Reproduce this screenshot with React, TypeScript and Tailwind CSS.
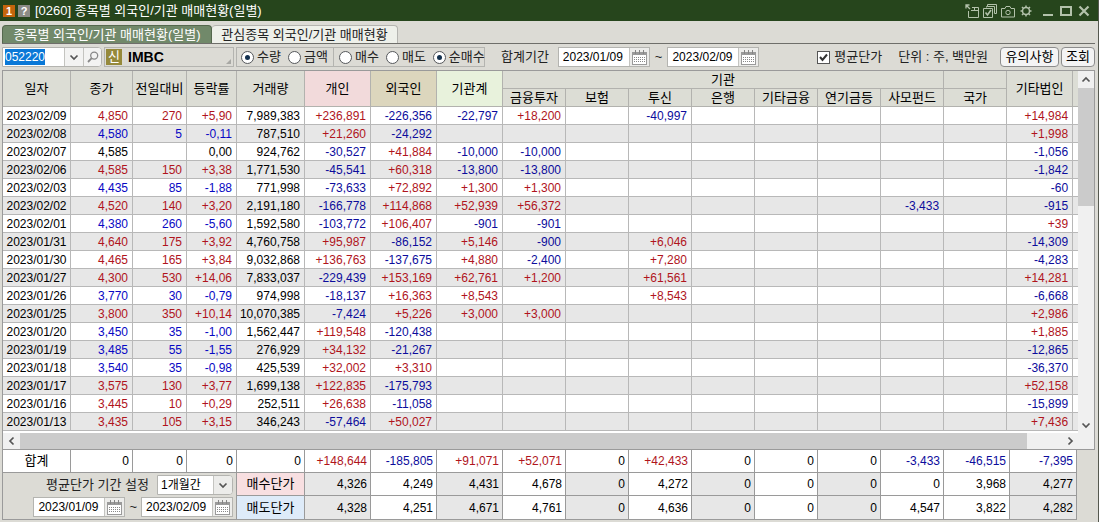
import { useState } from "react";
import type { ReactNode } from "react";

const RED = "text-[#b0141c]";
const BLUE = "text-[#0c0c9c]";
const BRIGHT_BLUE = "text-[#0808c4]";

const BASE_HEADERS = [
  { label: "종가", className: "bg-[#dcddd5]" },
  { label: "전일대비", className: "bg-[#dcddd5]" },
  { label: "등락률", className: "bg-[#dcddd5]" },
  { label: "거래량", className: "bg-[#dcddd5]" },
  { label: "개인", className: "bg-[#f2dadb]" },
  { label: "외국인", className: "bg-[#dcd6bd]" },
  { label: "기관계", className: "bg-[#e8f2dc]" },
];

const INSTITUTIONS = ["금융투자", "보험", "투신", "은행", "기타금융", "연기금등", "사모펀드", "국가"];

// date, close, change, rate, volume, individual, foreign, institutions total, 8 institutions, other corp.
const ROWS = [
  ["2023/02/09", "4,850", "270", "+5,90", "7,989,383", "+236,891", "-226,356", "-22,797", "+18,200", "", "-40,997", "", "", "", "", "", "+14,984"],
  ["2023/02/08", "4,580", "5", "-0,11", "787,510", "+21,260", "-24,292", "", "", "", "", "", "", "", "", "", "+1,998"],
  ["2023/02/07", "4,585", "", "0,00", "924,762", "-30,527", "+41,884", "-10,000", "-10,000", "", "", "", "", "", "", "", "-1,056"],
  ["2023/02/06", "4,585", "150", "+3,38", "1,771,530", "-45,541", "+60,318", "-13,800", "-13,800", "", "", "", "", "", "", "", "-1,842"],
  ["2023/02/03", "4,435", "85", "-1,88", "771,998", "-73,633", "+72,892", "+1,300", "+1,300", "", "", "", "", "", "", "", "-60"],
  ["2023/02/02", "4,520", "140", "+3,20", "2,191,180", "-166,778", "+114,868", "+52,939", "+56,372", "", "", "", "", "", "-3,433", "", "-915"],
  ["2023/02/01", "4,380", "260", "-5,60", "1,592,580", "-103,772", "+106,407", "-901", "-901", "", "", "", "", "", "", "", "+39"],
  ["2023/01/31", "4,640", "175", "+3,92", "4,760,758", "+95,987", "-86,152", "+5,146", "-900", "", "+6,046", "", "", "", "", "", "-14,309"],
  ["2023/01/30", "4,465", "165", "+3,84", "9,032,868", "+136,763", "-137,675", "+4,880", "-2,400", "", "+7,280", "", "", "", "", "", "-4,283"],
  ["2023/01/27", "4,300", "530", "+14,06", "7,833,037", "-229,439", "+153,169", "+62,761", "+1,200", "", "+61,561", "", "", "", "", "", "+14,281"],
  ["2023/01/26", "3,770", "30", "-0,79", "974,998", "-18,137", "+16,363", "+8,543", "", "", "+8,543", "", "", "", "", "", "-6,668"],
  ["2023/01/25", "3,800", "350", "+10,14", "10,070,385", "-7,424", "+5,226", "+3,000", "+3,000", "", "", "", "", "", "", "", "+2,986"],
  ["2023/01/20", "3,450", "35", "-1,00", "1,562,447", "+119,548", "-120,438", "", "", "", "", "", "", "", "", "", "+1,885"],
  ["2023/01/19", "3,485", "55", "-1,55", "276,929", "+34,132", "-21,267", "", "", "", "", "", "", "", "", "", "-12,865"],
  ["2023/01/18", "3,540", "35", "-0,98", "425,539", "+32,002", "+3,310", "", "", "", "", "", "", "", "", "", "-36,370"],
  ["2023/01/17", "3,575", "130", "+3,77", "1,699,138", "+122,835", "-175,793", "", "", "", "", "", "", "", "", "", "+52,158"],
  ["2023/01/16", "3,445", "10", "+0,29", "252,511", "+26,638", "-11,058", "", "", "", "", "", "", "", "", "", "-15,899"],
  ["2023/01/13", "3,435", "105", "+3,15", "346,243", "-57,464", "+50,027", "", "", "", "", "", "", "", "", "", "+7,436"],
];

const TOTALS = ["0", "0", "0", "0", "+148,644", "-185,805", "+91,071", "+52,071", "0", "+42,433", "0", "0", "0", "-3,433", "-46,515", "-7,395"];
const BUY_PRICES = ["4,326", "4,249", "4,431", "4,678", "0", "4,272", "0", "0", "0", "0", "3,968", "4,277"];
const SELL_PRICES = ["4,328", "4,251", "4,671", "4,761", "0", "4,636", "0", "0", "0", "4,547", "3,822", "4,282"];
const SHADED = [true, false, true, false, true, false, true, false, true, false, false, true];

function signColor(value: string, blue = BLUE) {
  if (value.startsWith("+")) return RED;
  if (value.startsWith("-")) return blue;
  return "text-black";
}

// price, change and rate all follow the direction of the day
function cellColor(row: string[], i: number) {
  return i >= 1 && i <= 3 ? signColor(row[3], BRIGHT_BLUE) : signColor(row[i]);
}

function Chevron({ dir }: { dir: "up" | "down" | "left" | "right" }) {
  const paths = {
    up: "M1.5 6.5 5 3l3.5 3.5",
    down: "M1.5 3.5 5 7l3.5-3.5",
    left: "M6.5 1.5 3 5l3.5 3.5",
    right: "M3.5 1.5 7 5 3.5 8.5",
  };
  return (
    <svg width="10" height="10" viewBox="0 0 10 10" fill="none" stroke="#555" strokeWidth="1.700" aria-hidden="true">
      <path d={paths[dir]} />
    </svg>
  );
}

function CalendarIcon() {
  return (
    <svg width="15" height="15" viewBox="0 0 15 15" fill="none" aria-hidden="true">
      <rect x="0.5" y="2.5" width="14" height="12" fill="#fff" stroke="#9a9a9a" />
      <path d="M1 4h13" stroke="#9a9a9a" strokeWidth="2" />
      <path d="M3.500 0v4M7.500 0v4M11.500 0v4" stroke="#858585" />
      <path d="M2 7.500h11M2 9.500h11M2 11.500h11" stroke="#888" strokeDasharray="1 1" />
    </svg>
  );
}

function DateField({ label, value }: { label: string; value: string }) {
  return (
    <div className="flex h-5 border border-[#b4b4b0] bg-white">
      <input
        type="text"
        aria-label={label}
        defaultValue={value}
        className="w-[70px] bg-white pl-1 text-xs text-black outline-none"
      />
      <button type="button" aria-label={`${label} 달력`} className="flex w-5 items-center justify-center border-l border-[#c4c4c0] bg-[#ececea]">
        <CalendarIcon />
      </button>
    </div>
  );
}

function Radio({ name, label, checked, onChange }: { name: string; label: string; checked: boolean; onChange: () => void }) {
  return (
    <label className="flex items-center gap-[3px] whitespace-nowrap">
      <input
        type="radio"
        name={name}
        checked={checked}
        onChange={onChange}
        className="grid size-[13px] appearance-none place-items-center rounded-full border border-[#55585c] bg-white before:size-[5px] before:rounded-full before:content-[''] checked:before:bg-[#12304e]"
      />
      {label}
    </label>
  );
}

function TitleButton({ label, children }: { label: string; children: ReactNode }) {
  return (
    <button type="button" aria-label={label} className="flex size-[18px] items-center justify-center text-[#b3c2ab]">
      <svg width="14" height="14" viewBox="0 0 14 14" fill="none" stroke="currentColor" aria-hidden="true">
        {children}
      </svg>
    </button>
  );
}

function TitleBar() {
  return (
    <header className="flex h-[21px] items-center bg-[#26451c] pr-[5px] pl-[3px] text-white">
      <span className="flex size-3 items-center justify-center bg-[#c4650c] text-[11px] font-bold">1</span>
      <span className="ml-[3px] flex size-3 items-center justify-center bg-[#8b8b86] text-[11px] font-bold">?</span>
      <h1 className="ml-[5px] text-[13px] whitespace-nowrap">[0260] 종목별 외국인/기관 매매현황(일별)</h1>
      <div className="ml-auto flex">
        <TitleButton label="분리">
          <path d="M1 1l4 4M1 4.500V1h3.500" strokeWidth="1.300" />
          <path d="M3.500 7v6.500h10v-10H7M6 6.500h7.500M9.500 3.500v3" />
        </TitleButton>
        <TitleButton label="복사">
          <path d="M3.500 3.500v-1h1v-2h9v9h-2M4.500 2.500h7v7" />
          <path d="M.5 4.500h9v9h-9z" />
          <path d="M2.500 8.500l2 2.500 3.500-5" strokeWidth="1.600" />
        </TitleButton>
        <TitleButton label="화면 저장">
          <path d="M1 4.500h3l1-2h4l1 2h3.500v8.500H.5V4.500z" />
          <circle cx="7" cy="8.500" r="2.200" />
        </TitleButton>
        <TitleButton label="설정">
          <circle cx="7" cy="7" r="3.500" strokeWidth="1.500" />
          <path d="M7 1.500v2M7 10.500v2M1.500 7h2M10.500 7h2M3 3l1.500 1.500M9.500 9.500 11 11M11 3 9.500 4.500M4.500 9.500 3 11" strokeWidth="1.500" />
        </TitleButton>
      </div>
      <div className="ml-1 flex">
        <TitleButton label="최소화">
          <path d="M2 11h10" strokeWidth="2" />
        </TitleButton>
        <TitleButton label="최대화">
          <path d="M2 3h10v8H2z" strokeWidth="2" />
        </TitleButton>
        <TitleButton label="닫기">
          <path d="M2.500 2.500l9 9M11.500 2.500l-9 9" strokeWidth="2.200" />
        </TitleButton>
      </div>
    </header>
  );
}

function Toolbar() {
  const [unit, setUnit] = useState("수량");
  const [side, setSide] = useState("순매수");

  return (
    <div className="flex items-center py-[3px]">
      <div className="flex h-5 overflow-hidden rounded-r border border-[#b4b4b0] bg-white">
        <input
          type="text"
          aria-label="종목코드"
          defaultValue="052220"
          autoFocus
          onFocus={(e) => e.target.select()}
          className="w-[61px] bg-white pl-0.5 text-xs outline-none selection:bg-[#0a78d7] selection:text-white"
        />
        <button type="button" aria-label="최근 종목" className="flex w-[19px] items-center justify-center border-l border-[#c4c4c0] bg-[#f3f3f2]">
          <Chevron dir="down" />
        </button>
        <button type="button" aria-label="종목 검색" className="flex w-[18px] items-center justify-center border-l border-[#c4c4c0] bg-[#f3f3f2]">
          <svg width="12" height="12" viewBox="0 0 12 12" fill="none" stroke="#888" strokeWidth="1.300" aria-hidden="true">
            <circle cx="7.200" cy="4.600" r="3.500" />
            <path d="M4.700 7.200 1 11" strokeWidth="1.800" />
          </svg>
        </button>
      </div>

      <div className="ml-0.5 flex h-5 w-[130px] items-center border border-[#b4b4b0] pl-px">
        <span className="flex size-4 items-center justify-center bg-[#95893a] text-[13px] text-white">신</span>
        <span className="ml-[6px] text-sm font-bold text-black">IMBC</span>
        <svg width="5" height="5" viewBox="0 0 5 5" className="mt-auto mr-0.5 mb-0.5 ml-auto" aria-hidden="true">
          <path d="M5 0v5H0z" fill="#a8a8a4" />
        </svg>
      </div>

      <div className="ml-0.5 flex h-5 w-[98px] items-center gap-[7px] border border-[#b4b4b0] pl-1">
        {["수량", "금액"].map((v) => (
          <Radio key={v} name="unit" label={v} checked={unit === v} onChange={() => setUnit(v)} />
        ))}
      </div>
      <div className="flex h-5 w-[151px] items-center gap-[7px] border border-l-0 border-[#b4b4b0] pl-[5px]">
        {["매수", "매도", "순매수"].map((v) => (
          <Radio key={v} name="side" label={v} checked={side === v} onChange={() => setSide(v)} />
        ))}
      </div>

      <span className="ml-4 whitespace-nowrap">합계기간</span>
      <div className="ml-[9px] flex items-center gap-[5px]">
        <DateField label="합계기간 시작일" value="2023/01/09" />
        <span>~</span>
        <DateField label="합계기간 종료일" value="2023/02/09" />
      </div>

      <label className="ml-auto flex items-center gap-1 whitespace-nowrap">
        <input type="checkbox" defaultChecked className="peer sr-only" />
        <svg width="13" height="13" viewBox="0 0 13 13" className="peer-checked:[&>path]:opacity-100" aria-hidden="true">
          <rect x="0.5" y="0.5" width="12" height="12" fill="#fff" stroke="#555" />
          <path d="M3 6l2.500 3L10 3.500" fill="none" stroke="#333" strokeWidth="2" className="opacity-0" />
        </svg>
        평균단가
      </label>
      <span className="ml-4 whitespace-nowrap">단위 : 주, 백만원</span>
      <button type="button" className="ml-3 h-5 w-[59px] rounded-[4px] border border-[#8c8c8c] bg-[#f4f4f4] whitespace-nowrap text-black">
        유의사항
      </button>
      <button type="button" className="ml-0.5 h-5 w-[34px] rounded-[4px] border border-[#8c8c8c] bg-[#f4f4f4] whitespace-nowrap text-black">
        조회
      </button>
    </div>
  );
}

function TradeTable() {
  const head = "border-r border-b border-[#b2b2ae] p-0 font-normal whitespace-nowrap";

  return (
    <table className="w-full table-fixed border-separate border-spacing-0 text-black">
      <colgroup>
        <col className="w-[68px]" />
        <col className="w-[62px]" />
        <col className="w-[54px]" />
        <col className="w-[50px]" />
        <col className="w-[68px]" />
        <col className="w-[66px]" />
        <col className="w-[66px]" />
        <col className="w-[66px]" />
        {INSTITUTIONS.map((name) => (
          <col key={name} className="w-[63px]" />
        ))}
        <col className="w-[66px]" />
        <col />
      </colgroup>
      <thead className="bg-[#dcddd5] text-[13px] leading-4">
        <tr className="h-[18px]">
          <th rowSpan={2} className={head}>일자</th>
          {BASE_HEADERS.map((h) => (
            <th key={h.label} rowSpan={2} className={`${head} ${h.className}`}>
              {h.label}
            </th>
          ))}
          <th colSpan={7} className={head}>기관</th>
          <th className={head}></th>
          <th rowSpan={2} className={head}>기타법인</th>
          <th rowSpan={2} className="border-b border-[#b2b2ae] p-0"></th>
        </tr>
        <tr className="h-[18px]">
          {INSTITUTIONS.map((name) => (
            <th key={name} className={head}>{name}</th>
          ))}
        </tr>
      </thead>
      <tbody className="text-xs">
        {ROWS.map((row) => (
          <tr key={row[0]} className="h-[18px] odd:bg-white even:bg-[#e7e7e7]">
            {row.map((value, i) => (
              <td
                key={i}
                className={`border-r border-b border-[#b8b8b8] py-0 whitespace-nowrap ${
                  i === 0 ? "px-0 text-center" : "pr-1 pl-0 text-right"
                } ${cellColor(row, i)}`}
              >
                {value}
              </td>
            ))}
            <td className="border-b border-[#b8b8b8] p-0"></td>
          </tr>
        ))}
      </tbody>
    </table>
  );
}

function SummaryTable() {
  const cell = "border-r border-b border-[#9a9a9a] py-0 pr-[3px] pl-0 text-right";

  return (
    <table className="w-full table-fixed border-separate border-spacing-0 text-xs text-black">
      <colgroup>
        <col className="w-[69px]" />
        <col className="w-[62px]" />
        <col className="w-[54px]" />
        <col className="w-[50px]" />
        <col className="w-[68px]" />
        <col className="w-[66px]" />
        <col className="w-[66px]" />
        <col className="w-[66px]" />
        {INSTITUTIONS.slice(0, 7).map((name) => (
          <col key={name} className="w-[63px]" />
        ))}
        <col className="w-[66px]" />
        <col className="w-[67px]" />
        <col />
      </colgroup>
      <tbody>
        <tr className="h-[23px] bg-white">
          <th className="border-r border-b border-l border-[#9a9a9a] p-0 text-[13px] font-normal">합계</th>
          {TOTALS.map((value, i) => (
            <td key={i} className={`${cell} ${signColor(value)}`}>{value}</td>
          ))}
          <td className="bg-[#dcdbd5] p-0"></td>
        </tr>
        <tr className="h-[23px]">
          <td colSpan={4} rowSpan={2} className="border-r border-b border-l border-[#9a9a9a] bg-[#dcdbd5] py-0 pr-[3px] pl-0 text-[13px] text-[#222]">
            <div className="flex flex-col items-end gap-0.5">
              <label className="flex items-center gap-2 whitespace-nowrap">
                평균단가 기간 설정
                <span className="grid h-5 w-[76px] overflow-hidden rounded-r border border-[#b4b4b0] bg-white">
                  <select className="col-start-1 row-start-1 appearance-none pl-[3px] text-xs text-black outline-none">
                    <option>1개월간</option>
                    <option>3개월간</option>
                    <option>6개월간</option>
                  </select>
                  <span className="pointer-events-none col-start-1 row-start-1 flex w-[19px] items-center justify-center justify-self-end border-l border-[#c4c4c0] bg-[#ececea]">
                    <Chevron dir="down" />
                  </span>
                </span>
              </label>
              <div className="flex items-center gap-1">
                <DateField label="평균단가 시작일" value="2023/01/09" />
                <span>~</span>
                <DateField label="평균단가 종료일" value="2023/02/09" />
              </div>
            </div>
          </td>
          <th className="border-r border-b border-[#9a9a9a] bg-[#f8dfe1] p-0 text-[13px] font-normal">매수단가</th>
          {BUY_PRICES.map((value, i) => (
            <td key={i} className={`${cell} ${SHADED[i] ? "bg-[#e7e7e7]" : "bg-white"}`}>{value}</td>
          ))}
        </tr>
        <tr className="h-6">
          <th className="border-r border-b border-[#9a9a9a] bg-[#deebf9] p-0 text-[13px] font-normal">매도단가</th>
          {SELL_PRICES.map((value, i) => (
            <td key={i} className={`${cell} ${SHADED[i] ? "bg-[#e7e7e7]" : "bg-white"}`}>{value}</td>
          ))}
        </tr>
      </tbody>
    </table>
  );
}

export default function App() {
  return (
    <div className="min-h-screen border-r border-[#55584f] bg-[#dcdbd5] font-['Liberation_Sans','Noto_Sans_CJK_KR',sans-serif] text-[13px] leading-4 text-[#222]">
      <TitleBar />
      <main className="pr-[3px] pl-0.5">
        <nav className="flex items-end border-b border-[#6e6e6a] pt-1">
          <button type="button" className="h-[18px] w-[210px] rounded-t-[4px] border border-b-0 border-[#55684e] bg-[#71896a] whitespace-nowrap text-white">
            종목별 외국인/기관 매매현황(일별)
          </button>
          <button type="button" className="h-[18px] w-[186px] rounded-t-[4px] border border-b-0 border-l-0 border-[#b4b4b0] bg-[#eef0ea] whitespace-nowrap">
            관심종목 외국인/기관 매매현황
          </button>
        </nav>
        <Toolbar />

        <section className="flex border border-[#9a9a9a]">
          <div className="min-w-0 flex-1 bg-white">
            <TradeTable />
            <div className="mt-0.5 flex h-4 bg-[#f0f0f0]">
              <button type="button" aria-label="왼쪽으로" className="flex w-[17px] items-center justify-center">
                <Chevron dir="left" />
              </button>
              <div className="mr-[34px] flex-1 bg-[#cbcbcb]" />
              <button type="button" aria-label="오른쪽으로" className="flex w-[17px] items-center justify-center">
                <Chevron dir="right" />
              </button>
            </div>
          </div>
          <div className="flex w-4 flex-col bg-[#f0f0f0]">
            <button type="button" aria-label="위로" className="flex h-[17px] items-center justify-center">
              <Chevron dir="up" />
            </button>
            <div className="h-[118px] bg-[#cbcbcb]" />
            <button type="button" aria-label="아래로" className="mt-auto mb-4 flex h-[17px] items-center justify-center">
              <Chevron dir="down" />
            </button>
          </div>
        </section>
        <SummaryTable />
      </main>
    </div>
  );
}
